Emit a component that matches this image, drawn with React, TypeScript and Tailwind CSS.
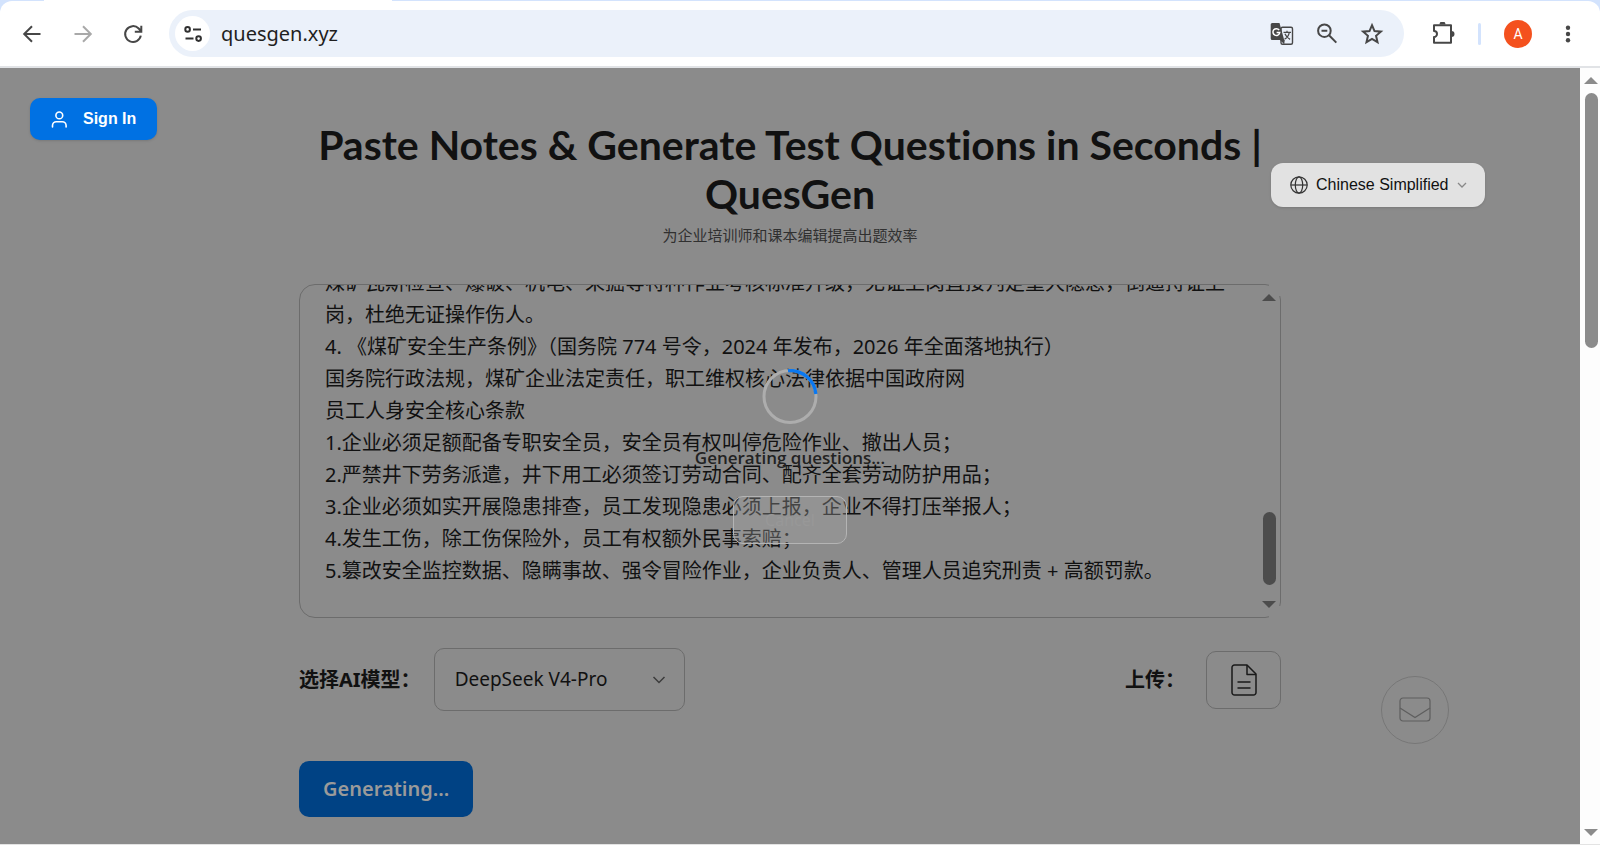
import React from "react";

const LINES = [
  "煤矿瓦斯检查、爆破、机电、采掘等特种作业考核标准升级，无证上岗直接判定重大隐患，倒逼持证上岗，杜绝无证操作伤人。",
  "4. 《煤矿安全生产条例》（国务院 774 号令，2024 年发布，2026 年全面落地执行）",
  "国务院行政法规，煤矿企业法定责任，职工维权核心法律依据中国政府网",
  "员工人身安全核心条款",
  "1.企业必须足额配备专职安全员，安全员有权叫停危险作业、撤出人员；",
  "2.严禁井下劳务派遣，井下用工必须签订劳动合同、配齐全套劳动防护用品；",
  "3.企业必须如实开展隐患排查，员工发现隐患必须上报，企业不得打压举报人；",
  "4.发生工伤，除工伤保险外，员工有权额外民事索赔；",
  "5.篡改安全监控数据、隐瞒事故、强令冒险作业，企业负责人、管理人员追究刑责 + 高额罚款。",
];

function BrowserBar() {
  return (
    <header className="bg-[#d3e3fd]">
      <div className="ml-11 h-px w-[348px] bg-white" />
      <div className="flex h-[67px] items-center rounded-t-xl border-b-2 border-[#e1e3e6] bg-white text-[#474747]">
        <button aria-label="Back" className="ml-5 flex size-6 items-center justify-center">
          <svg viewBox="0 0 24 24" className="size-6" fill="none" stroke="currentColor" strokeWidth="2">
            <path d="M20.5 12H4.6M12 4.2 4.2 12l7.8 7.8" />
          </svg>
        </button>
        <button aria-label="Forward" className="ml-[27px] flex size-6 items-center justify-center text-[#a9a9a9]">
          <svg viewBox="0 0 24 24" className="size-6" fill="none" stroke="currentColor" strokeWidth="2">
            <path d="M3.500 12h15.900M12 4.200 19.800 12l-7.800 7.800" />
          </svg>
        </button>
        <button aria-label="Reload" className="ml-[26px] flex size-6 items-center justify-center">
          <svg viewBox="0 0 24 24" className="size-6" fill="none" stroke="currentColor" strokeWidth="2">
            <path d="M19.800 13.600A7.900 7.900 0 1 1 17.700 6.500L20 9M20.300 3.800V9.700H13.800" />
          </svg>
        </button>
        <div className="ml-6 flex h-[47px] flex-1 items-center rounded-full bg-[#ebf1fa] pr-5 pl-[6px]">
          <button aria-label="Site information" className="flex size-[35px] items-center justify-center rounded-full bg-white">
            <svg viewBox="0 0 20 20" className="size-5" fill="none" stroke="#303030" strokeWidth="2">
              <circle cx="4.600" cy="5.400" r="2.300" />
              <path d="M10 5.400h8M2.500 14.600h8" />
              <circle cx="15.600" cy="14.600" r="2.300" />
            </svg>
          </button>
          <input
            aria-label="Address"
            defaultValue="quesgen.xyz"
            className="ml-[11px] min-w-0 flex-1 bg-transparent pt-px font-['Noto_Sans',sans-serif] text-xl text-[#1f1f1f] outline-none"
          />
          <button aria-label="Translate" className="flex size-6 items-center justify-center">
            <svg viewBox="0 0 24 24" className="size-6">
              <rect x="11" y="5.300" width="11.500" height="17" rx="1.500" fill="#ebf1fa" stroke="#474747" strokeWidth="1.400" />
              <path d="M2.200 1h7.300l4.700 17H2.200A1.500 1.500 0 0 1 .7 16.500v-14A1.500 1.500 0 0 1 2.200 1Z" fill="#474747" />
              <path d="m10 18 4.200 4.200.6-4.200Z" fill="#474747" />
              <path d="M9.200 8.200A3.400 3.400 0 1 0 9.700 10.600H6.600" fill="none" stroke="#fff" strokeWidth="1.500" />
              <path d="M13.500 10.300h7.500M17 8.700v1.600M19.300 10.300c-.5 3-2.600 5.600-4.800 6.900M14.900 11.800c.8 2 3 4.500 5.200 5.600" fill="none" stroke="#474747" strokeWidth="1.200" />
            </svg>
          </button>
          <button aria-label="Zoom" className="ml-[21px] flex size-6 items-center justify-center">
            <svg viewBox="0 0 24 24" className="size-6" fill="none" stroke="currentColor" strokeWidth="2">
              <circle cx="9.400" cy="8.700" r="6.300" />
              <path d="m14 13.300 7.300 7.300M6.500 8.700h5.800" />
            </svg>
          </button>
          <button aria-label="Bookmark" className="ml-[21px] flex size-6 items-center justify-center">
            <svg viewBox="0 0 24 24" className="size-6" fill="none" stroke="currentColor" strokeWidth="2">
              <path d="m12 3.200 2.500 5.900 6.400.55-4.850 4.200 1.450 6.250L12 16.800l-5.500 3.300 1.450-6.250L3.100 9.650l6.400-.55Z" />
            </svg>
          </button>
        </div>
        <button aria-label="Extensions" className="ml-[27px] flex size-6 items-center justify-center">
          <svg viewBox="0 0 24 24" className="size-6">
            <path d="M3 3.200h17v17.500H3v-5.700a3 3 0 0 0 0-6Z" fill="none" stroke="currentColor" strokeWidth="2" strokeLinejoin="round" />
            <path d="M8.500 2.500a3 3 0 0 1 6 0ZM20.500 9a3 3 0 0 1 0 6Z" fill="currentColor" />
          </svg>
        </button>
        <span className="ml-[23px] h-[22px] w-[3px] rounded bg-[#d3e3fd]" />
        <button aria-label="Profile" className="ml-[23px] flex size-7 items-center justify-center rounded-full bg-[#f4511e] font-['Roboto',sans-serif] text-sm text-white">
          A
        </button>
        <button aria-label="Menu" className="mr-5 ml-6 flex size-6 items-center justify-center">
          <svg viewBox="0 0 24 24" className="size-6" fill="currentColor">
            <circle cx="12" cy="5.800" r="2.200" />
            <circle cx="12" cy="12" r="2.200" />
            <circle cx="12" cy="18.200" r="2.200" />
          </svg>
        </button>
      </div>
    </header>
  );
}

function Arrow({ down = false }: { down?: boolean }) {
  return (
    <svg viewBox="0 0 14 7" className="h-[7px] w-[14px] shrink-0" fill="currentColor">
      <path d={down ? "M0 0h14L7 7Z" : "M0 7h14L7 0Z"} />
    </svg>
  );
}

function PageScrollbar() {
  return (
    <div className="flex w-5 shrink-0 flex-col items-center bg-[#fdfdfd] pt-[9px] pb-2 pl-0.5 text-[#8b8b8b]">
      <Arrow />
      <div className="mt-[9px] h-[255px] w-[13px] rounded-full bg-current" />
      <div className="flex-1" />
      <Arrow down />
    </div>
  );
}

function NotesBox() {
  const notes = React.useRef<HTMLTextAreaElement>(null);
  React.useLayoutEffect(() => {
    if (notes.current) notes.current.scrollTop = notes.current.scrollHeight;
  }, []);
  return (
    <div className="relative mt-[37px] h-[334px] rounded-2xl border border-[#6c6c6c]">
      <textarea
        ref={notes}
        aria-label="Notes"
        defaultValue={LINES.join("\n")}
        className="block size-full resize-none bg-transparent py-[30px] pr-[45px] pl-[25px] text-xl leading-8 outline-none [scrollbar-width:none]"
      />
      <div className="absolute -top-px -right-px h-3 w-3 bg-[#8b8b8b]" />
      <div className="absolute -right-px -bottom-px h-3 w-3 bg-[#8b8b8b]" />
      <div className="absolute inset-y-[9px] right-1 flex w-[14px] flex-col items-center text-[#4c4c4c]">
        <Arrow />
        <div className="flex-1" />
        <div className="mb-4 h-[73px] w-[13px] rounded-full bg-current" />
        <Arrow down />
      </div>
    </div>
  );
}

function LoadingOverlay() {
  return (
    <div role="status" className="absolute inset-0 flex flex-col items-center justify-center">
      <svg viewBox="0 0 56 56" className="size-14" fill="none" strokeWidth="3">
        <circle cx="28" cy="27.500" r="26" stroke="#adadad" />
        <path d="M26 1.600A26 26 0 0 1 53.900 25" stroke="#0a78f0" strokeWidth="3.300" />
      </svg>
      <p className="mt-[19px] font-['Open_Sans',sans-serif] text-[17px] leading-[27px] font-semibold text-[#222]">Generating questions...</p>
      <button className="mt-[25px] h-12 w-[114px] rounded-[10px] border border-[#b4b4b4] bg-[#a4a4a4]/35 text-base text-[#989898]">Cancel</button>
    </div>
  );
}

export default function App() {
  return (
    <div
      lang="zh-CN"
      className="flex h-screen flex-col overflow-hidden bg-[#e3e3e3] pb-px font-['Noto_Sans','Noto_Sans_CJK_SC',sans-serif]"
    >
      <BrowserBar />
      <div className="flex min-h-0 flex-1">
        <main className="relative min-w-0 flex-1 overflow-hidden bg-[#8b8b8b] text-[#111]">
          <div className="mx-auto flex w-[982px] max-w-full flex-col pt-[52px]">
            <h1 className="text-center font-['Lato',sans-serif] text-[41px] leading-[49px] font-bold [font-variant-ligatures:none]">
              Paste Notes &amp; Generate Test Questions in Seconds | QuesGen
            </h1>
            <p className="mt-[5px] text-center text-[15px] leading-6 text-[#303030]">为企业培训师和课本编辑提高出题效率</p>

            <NotesBox />

            <div className="mt-[30px] flex items-center">
              <label htmlFor="model" className="text-xl font-bold">选择AI模型：</label>
              <div className="relative ml-[13px]">
                <select
                  id="model"
                  className="block h-[63px] w-[251px] appearance-none rounded-[10px] border border-[#6c6c6c] bg-transparent pl-5 text-[19px]"
                >
                  <option>DeepSeek V4-Pro</option>
                </select>
                <svg viewBox="0 0 14 8" className="pointer-events-none absolute inset-y-0 right-[19px] my-auto h-2 w-[14px]" fill="none" stroke="#3c3c3c" strokeWidth="1.500">
                  <path d="m1.500 1 5.500 5.500L12.500 1" />
                </svg>
              </div>
              <label htmlFor="upload" className="ml-auto text-xl font-bold">上传：</label>
              <button id="upload" className="ml-[21px] flex h-[58px] w-[75px] items-center justify-center rounded-[10px] border border-[#6c6c6c]">
                <svg viewBox="0 0 26 32" className="h-8 w-[26px]" fill="none" stroke="#1a1a1a" strokeWidth="1.500" strokeLinejoin="round">
                  <path d="M3.500 1H16l9 9v18.500a2.500 2.500 0 0 1-2.500 2.500h-19A2.500 2.500 0 0 1 1 28.500v-25A2.500 2.500 0 0 1 3.500 1Z" />
                  <path d="M16 1v9.500h9M6.500 18h13M6.500 24h13" />
                </svg>
              </button>
            </div>

            <div className="mt-[50px]">
              <button className="h-14 rounded-[10px] bg-[#004284] px-6 text-xl font-semibold text-[#9a9a9a]">Generating...</button>
            </div>
          </div>

          <LoadingOverlay />

          <button className="absolute top-[30px] left-[30px] flex h-[42px] w-[127px] items-center rounded-[10px] bg-[#0071e3] pl-5 font-['Liberation_Sans',sans-serif] text-base font-bold text-white shadow-sm">
            <svg viewBox="0 0 20 20" className="size-5" fill="none" stroke="currentColor" strokeWidth="1.600" strokeLinecap="round">
              <circle cx="9.300" cy="6.400" r="3.400" />
              <path d="M2.500 18v-1.500a3.800 3.800 0 0 1 3.800-3.800h6a3.800 3.800 0 0 1 3.800 3.800v1.500" />
            </svg>
            <span className="ml-[13px]">Sign In</span>
          </button>

          <button className="absolute top-[95px] right-[95px] flex h-11 w-[214px] items-center rounded-xl bg-[#e2e2e2] pl-[19px] font-['Liberation_Sans',sans-serif] text-base text-[#111] shadow-sm">
            <svg viewBox="0 0 18 18" className="size-[18px]" fill="none" stroke="#333" strokeWidth="1.200">
              <circle cx="9" cy="9" r="8.200" />
              <ellipse cx="9" cy="9" rx="3.700" ry="8.200" />
              <path d="M.8 9h16.400" />
            </svg>
            <span className="ml-2 whitespace-nowrap">Chinese Simplified</span>
            <svg viewBox="0 0 10 6" className="ml-2 h-[6px] w-[10px]" fill="none" stroke="#888" strokeWidth="1.300">
              <path d="m1 1 4 4 4-4" />
            </svg>
          </button>

          <button aria-label="Contact" className="absolute right-[131px] bottom-[100px] flex size-[68px] items-center justify-center rounded-full border border-[#777]">
            <svg viewBox="0 0 32 27" className="h-[27px] w-8" fill="none" stroke="#5e5e5e" strokeWidth="1.200">
              <rect x="1" y="1" width="30" height="23" rx="3" />
              <path d="m1 11 15 9.500L31 11" />
            </svg>
          </button>
        </main>
        <PageScrollbar />
      </div>
    </div>
  );
}
